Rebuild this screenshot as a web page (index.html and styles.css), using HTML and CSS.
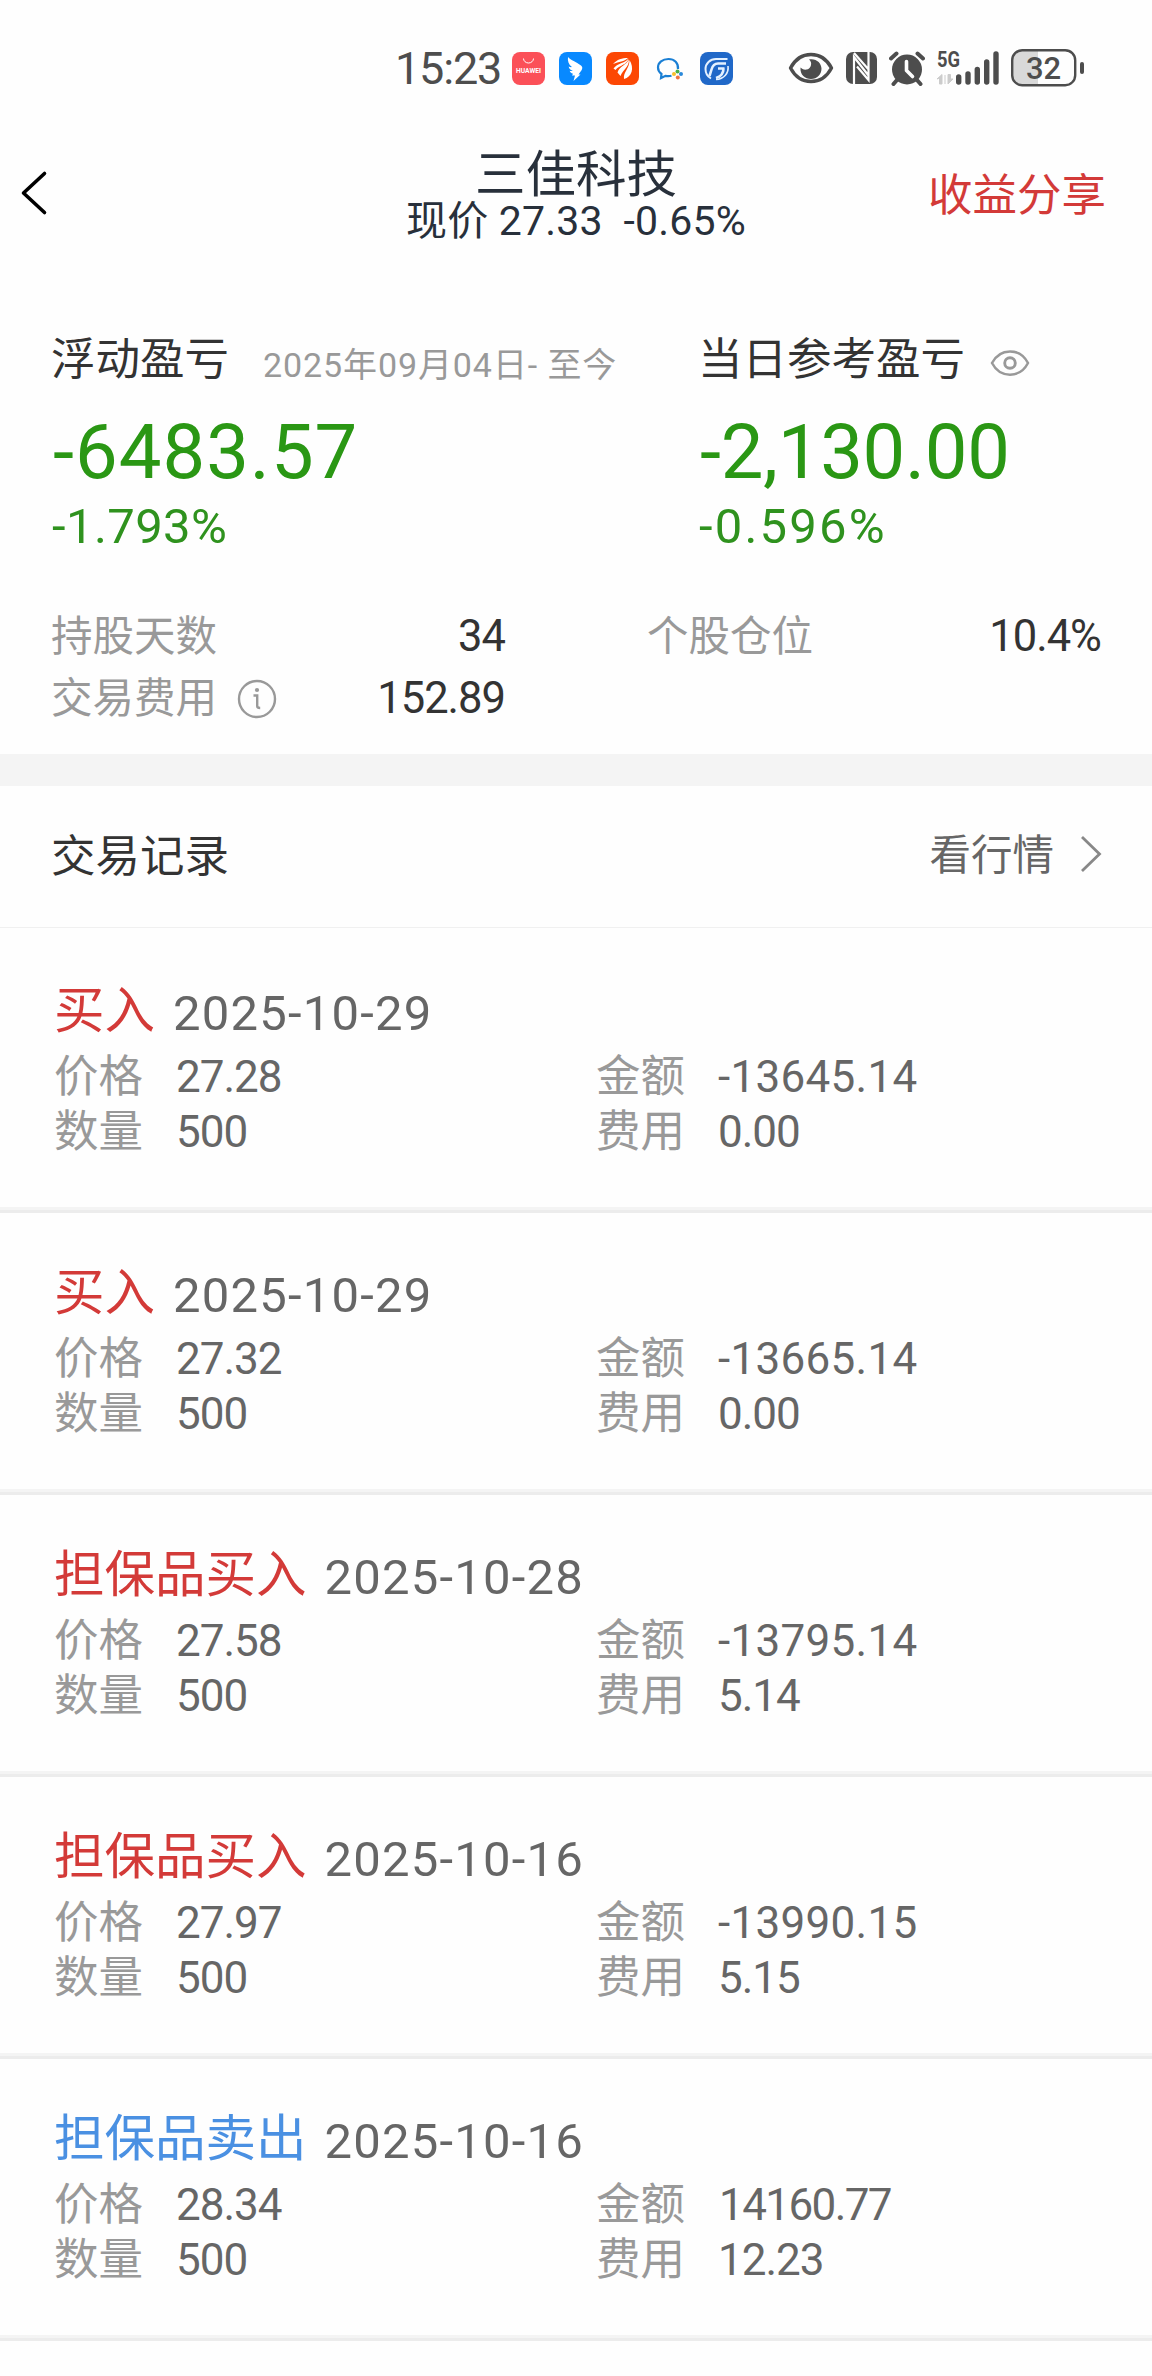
FILE: index.html
```html
<!DOCTYPE html>
<html lang="zh-CN">
<head>
    <meta charset="UTF-8">
    <meta name="viewport" content="width=device-width, initial-scale=1.0">
    <title>三佳科技</title>
    <link rel="stylesheet" href="styles.css">
</head>
<body>
    <div class="status-bar">
        <span class="time">15:23</span>
        <div class="app-icons">
            <svg width="33" height="33" viewBox="0 0 33 33">
                <rect width="33" height="33" rx="8" fill="#fb5058"/>
                <path d="M11.5 6.5a5 4.5 0 0 0 10 0" fill="none" stroke="#fff" stroke-width="1"/>
                <text x="16.5" y="21" text-anchor="middle" textLength="25" lengthAdjust="spacingAndGlyphs" class="huawei">HUAWEI</text>
            </svg>
            <svg width="33" height="33" viewBox="0 0 33 33">
                <rect width="33" height="33" rx="8" fill="#0889ff"/>
                <path d="M9 5c3 3.500 8 4.500 13 8.500 1.500 1.200 1.700 2.500.7 4.500l-3.200 4.500h2L14.500 29l1.500-5.500h-3l1-1.800c-2-.4-3-1.700-3.300-3 1 .3 2 .4 3 .1-2.600-.8-3.700-2.300-4-4.300 1.200.6 2.200.8 3.200.6C9.500 12.500 8.500 9 9 5z" fill="#fff"/>
            </svg>
            <svg width="33" height="33" viewBox="0 0 33 33">
                <rect width="33" height="33" rx="8" fill="#fc4704"/>
                <path d="M7 12C11 7.500 16 6 22 6c-4 4-9 3.500-15 6zM7.500 16.500c4-5.500 11-5 15-10-1.500 6.500-9 6.500-13 11.500zM11.500 20.500c2-6.500 9-7.500 11.500-13 0 8-6 10-8.500 16.500zM18 27c-1-7 5.500-10 5.500-19C28.500 16 26 25 18 27z" fill="#fff"/>
            </svg>
            <svg width="33" height="33" viewBox="0 0 33 33">
                <path d="M25 17c.5-6-3.500-10-9.500-10S5 10.500 5 15.500c0 3 1.500 5 3.500 6.500L8 26l4.500-2.200c2 .4 4 .4 6-.1" fill="none" stroke="#1a7fd4" stroke-width="2.200"/>
                <circle cx="24.5" cy="19.5" r="2" fill="#4aae48"/>
                <circle cx="28" cy="22" r="2" fill="#2a8adb"/>
                <circle cx="24.8" cy="25.5" r="2" fill="#ef7340"/>
                <circle cx="21" cy="22" r="2" fill="#f6bf2e"/>
            </svg>
            <svg width="33" height="33" viewBox="0 0 33 33">
                <rect width="33" height="33" rx="8" fill="#2068c8"/>
                <path d="M27.500 7H16C10 7 5.500 11.500 5.500 17c0 4 2 7.500 5.500 9.500" fill="none" stroke="#e4f1ff" stroke-width="2"/>
                <path d="M26 11.500h-8c-4 0-5.500 2.500-6.500 6l-2 6.500M24.500 16.500h-6.500M23.500 16.500c0 5-2.500 8-7.500 9.500" fill="none" stroke="#e4f1ff" stroke-width="2.600"/>
                <path d="M28 14c1 7-4 13-12 13.500" fill="none" stroke="#e4f1ff" stroke-width="1.600"/>
            </svg>
        </div>
        <div class="sys-icons">
            <svg width="46" height="32" viewBox="0 0 46 32">
                <path d="M2.500 16C12-2 34-2 43.500 16 34 34 12 34 2.500 16z" fill="none" stroke="#4d4d4d" stroke-width="3.400" stroke-linejoin="round"/>
                <path d="M21 7.500c4 3 2 9-2 10-3 .6-5-.5-6.500-2C12 23 17 27 23 27c6 0 10.500-4.500 10.500-10.200C33.500 11 28 6 21 7.500z" fill="#4d4d4d"/>
            </svg>
            <svg class="nfc" width="31" height="32" viewBox="0 0 31 32">
                <rect width="31" height="32" rx="7" fill="#4d4d4d"/>
                <path d="M8 32V5l14.500 18.500M11 14.500L22.500 28V0M8 1l15 17" fill="none" stroke="#fefefe" stroke-width="2.200"/>
            </svg>
            <svg class="alarm" width="36" height="35" viewBox="0 0 36 35">
                <circle cx="18" cy="18.5" r="15" fill="#4d4d4d"/>
                <path d="M2 7.500L7.500 2.500M34 7.500l-5.500-5M8 29l-3.500 4M28 29l3.500 4" stroke="#4d4d4d" stroke-width="4" stroke-linecap="round"/>
                <path d="M17.500 10.500v9l6 6" fill="none" stroke="#fefefe" stroke-width="3.600" stroke-linecap="round" stroke-linejoin="round"/>
            </svg>
            <svg class="signal" width="63" height="56" viewBox="0 -10 63 56">
                <text x="0" y="17" textLength="23" lengthAdjust="spacingAndGlyphs" class="net">5G</text>
                <path d="M0 29l5-4.500V34h-2.500v-6zM8 25v9M11 24.500V34l5-5h-2.500v-4.500z" fill="#ccc" stroke="#ccc" stroke-width="1"/>
                <path d="M21.700 27v5M31 24v8M40.300 19.500V32M49.700 12v20M59 4v28" stroke="#4d4d4d" stroke-width="5.400" stroke-linecap="round"/>
            </svg>
            <svg class="battery" width="74" height="38" viewBox="0 0 74 38">
                <path d="M11 2h16v34H11a9 9 0 0 1-9-9V11a9 9 0 0 1 9-9z" fill="#d9d9d9"/>
                <rect x="1.2" y="1.2" width="63" height="35" rx="10" fill="none" stroke="#4d4d4d" stroke-width="2.400"/>
                <path d="M71 15v8" stroke="#4d4d4d" stroke-width="4" stroke-linecap="round"/>
                <text x="32.5" y="30" text-anchor="middle" class="level">32</text>
            </svg>
        </div>
    </div>

    <div class="nav-bar">
        <a class="back">
            <svg width="30" height="46" viewBox="0 0 30 46">
                <path d="M25.500 3.500L4.500 23l21 19.500" fill="none" stroke="#000" stroke-width="3.600" stroke-linecap="round" stroke-linejoin="round"/>
            </svg>
        </a>
        <div class="nav-title">
            <h1>三佳科技</h1>
            <p>现价 27.33&nbsp; -0.65%</p>
        </div>
        <a class="share">收益分享</a>
    </div>

    <div class="summary">
        <div class="profit">
            <div class="profit-col">
                <div class="profit-label">浮动盈亏 <span class="period">2025年09月04日- 至今</span></div>
                <div class="profit-value">-6483.57</div>
                <div class="profit-rate">-1.793%</div>
            </div>
            <div class="profit-col today">
                <div class="profit-label">当日参考盈亏
                    <svg class="eye" width="40" height="28" viewBox="0 0 40 28">
                        <path d="M2 14C10-1.500 30-1.500 38 14 30 29.500 10 29.500 2 14z" fill="none" stroke="#999" stroke-width="2.500"/>
                        <circle cx="20" cy="14" r="5.3" fill="none" stroke="#999" stroke-width="2.900"/>
                    </svg>
                </div>
                <div class="profit-value">-2,130.00</div>
                <div class="profit-rate">-0.596%</div>
            </div>
        </div>
        <div class="stats">
            <div class="stat"><span>持股天数</span><b>34</b></div>
            <div class="stat"><span>个股仓位</span><b>10.4%</b></div>
            <div class="stat">
                <span>交易费用</span>
                <svg class="info" width="40" height="40" viewBox="0 0 40 40">
                    <circle cx="20" cy="20" r="18" fill="none" stroke="#999" stroke-width="2.400"/>
                    <circle cx="20" cy="11" r="2.1" fill="#999"/>
                    <path d="M16.500 16.500h3.700v10.500c0 1.500.8 2 3 2" fill="none" stroke="#999" stroke-width="2.400"/>
                </svg>
                <b>152.89</b>
            </div>
        </div>
    </div>

    <div class="section-header">
        <h2>交易记录</h2>
        <a>看行情
            <svg width="24" height="38" viewBox="0 0 24 38">
                <path d="M3 2l17.500 17L3 36" fill="none" stroke="#888" stroke-width="2.800"/>
            </svg>
        </a>
    </div>

    <div class="records">
        <div class="record">
            <div class="record-head"><span class="buy">买入</span><span class="date">2025-10-29</span></div>
            <div class="record-grid">
                <span>价格</span><b>27.28</b><span>金额</span><b class="minus">-13645.14</b>
                <span>数量</span><b>500</b><span>费用</span><b>0.00</b>
            </div>
        </div>
        <div class="record">
            <div class="record-head"><span class="buy">买入</span><span class="date">2025-10-29</span></div>
            <div class="record-grid">
                <span>价格</span><b>27.32</b><span>金额</span><b class="minus">-13665.14</b>
                <span>数量</span><b>500</b><span>费用</span><b>0.00</b>
            </div>
        </div>
        <div class="record">
            <div class="record-head"><span class="buy">担保品买入</span><span class="date">2025-10-28</span></div>
            <div class="record-grid">
                <span>价格</span><b>27.58</b><span>金额</span><b class="minus">-13795.14</b>
                <span>数量</span><b>500</b><span>费用</span><b>5.14</b>
            </div>
        </div>
        <div class="record">
            <div class="record-head"><span class="buy">担保品买入</span><span class="date">2025-10-16</span></div>
            <div class="record-grid">
                <span>价格</span><b>27.97</b><span>金额</span><b class="minus">-13990.15</b>
                <span>数量</span><b>500</b><span>费用</span><b>5.15</b>
            </div>
        </div>
        <div class="record">
            <div class="record-head"><span class="sell">担保品卖出</span><span class="date">2025-10-16</span></div>
            <div class="record-grid">
                <span>价格</span><b>28.34</b><span>金额</span><b class="plus">14160.77</b>
                <span>数量</span><b>500</b><span>费用</span><b>12.23</b>
            </div>
        </div>
    </div>
</body>
</html>
```

FILE: styles.css
```css
* {
    box-sizing: border-box;
}
body {
    font-family: Roboto, 'Noto Sans CJK SC', sans-serif;
    margin: 0;
    padding: 0;
    background-color: #fefefe;
    color: #333;
}
h1, h2, p {
    margin: 0;
    font-weight: 400;
}
b {
    font-weight: 400;
}
svg {
    display: block;
    flex: none;
}

/* status bar */
.status-bar {
    display: flex;
    align-items: center;
    height: 136px;
    padding-left: 395px;
    color: #4d4d4d;
}
.time {
    width: 117px;
    font-size: 45px;
    letter-spacing: -1.2px;
    white-space: nowrap;
}
.app-icons {
    display: flex;
    gap: 14px;
}
.sys-icons {
    display: flex;
    align-items: center;
    margin-left: 55px;
}
.nfc {
    margin-left: 12px;
}
.alarm {
    margin-left: 12px;
}
.signal {
    margin-left: 12px;
}
.battery {
    margin-left: 11px;
}
.huawei {
    font-size: 7px;
    font-weight: 700;
    fill: #fff;
}
.net {
    font-size: 22px;
    font-weight: 700;
    fill: #4d4d4d;
}
.level {
    font-size: 31px;
    font-weight: 500;
    fill: #4d4d4d;
}

/* title */
.nav-bar {
    display: grid;
    grid-template-columns: 1fr auto 1fr;
    align-items: center;
    height: 114px;
    padding: 0 46px 0 19px;
}
.nav-title {
    margin-left: 27px;
    padding-top: 2px;
    text-align: center;
    color: #28303b;
}
.nav-title h1 {
    font-size: 50.5px;
    line-height: 54px;
}
.nav-title p {
    font-size: 41px;
    line-height: 39px;
    letter-spacing: 0.2px;
}
.share {
    justify-self: end;
    padding-bottom: 3px;
    font-size: 44.5px;
    color: #d33a38;
}

/* profit summary */
.summary {
    padding: 80px 51px 24px;
    border-bottom: 32px solid #f4f4f4;
}
.profit {
    display: flex;
}
.profit-col {
    width: 647px;
}
.today {
    width: auto;
}
.profit-label {
    display: flex;
    align-items: center;
    font-size: 44.5px;
    line-height: 60px;
    white-space: nowrap;
}
.period {
    margin: 10px 0 0 34px;
    font-size: 34px;
    line-height: 50px;
    letter-spacing: 0.9px;
    color: #999;
}
.eye {
    margin: 6px 0 0 25px;
}
.profit-value {
    margin-top: 17px;
    padding-left: 2px;
    font-size: 76px;
    line-height: 91px;
    letter-spacing: 1px;
    color: #2a9714;
}
.profit-rate {
    margin-top: -1px;
    padding-left: 1px;
    font-size: 49px;
    line-height: 60px;
    letter-spacing: 0.4px;
    color: #2f921e;
}
.today .profit-value {
    letter-spacing: -0.3px;
}
.today .profit-rate {
    letter-spacing: 2.2px;
}
.stats {
    display: grid;
    grid-template-columns: 454px 454px;
    justify-content: space-between;
    margin-top: 49px;
}
.stat {
    display: flex;
    align-items: center;
    height: 62px;
    font-size: 41.5px;
    line-height: 62px;
    color: #999;
}
.stat b {
    margin-left: auto;
    font-size: 43.5px;
    letter-spacing: -1px;
    color: #333;
}
.info {
    margin-left: 20px;
}

/* trade records */
.section-header {
    display: flex;
    justify-content: space-between;
    align-items: center;
    height: 142px;
    padding: 0 49px 9px 51px;
    border-bottom: 1px solid #f0f0f0;
}
.section-header h2 {
    font-size: 44.5px;
}
.section-header a {
    display: flex;
    align-items: center;
    gap: 25px;
    font-size: 41.5px;
    color: #666;
}
.section-header svg {
    margin-top: 4px;
}
.records {
    padding-top: 3px;
}
.record {
    height: 282px;
    padding: 54px 0 0 54px;
    border-bottom: 3px solid #ececec;
    box-shadow: inset 0 -3px #f4f4f4;
}
.record-head {
    display: flex;
    gap: 18px;
    height: 57px;
    font-size: 50.5px;
    line-height: 57px;
}
.buy, .sell {
    margin-top: -3px;
}
.buy {
    color: #d33a38;
}
.sell {
    color: #4a90e2;
}
.date {
    font-size: 49px;
    letter-spacing: 1.2px;
    color: #666;
}
.record-grid {
    display: grid;
    grid-template-columns: 122px 420px 122px 1fr;
    margin-top: 8px;
    font-size: 44.5px;
    line-height: 55px;
    color: #999;
}
.record-grid b {
    font-size: 44px;
    letter-spacing: -1px;
    color: #666;
}
.record-grid .minus {
    letter-spacing: 0.3px;
}
.record-grid .plus {
    padding-left: 1px;
    letter-spacing: -1.6px;
}
```
